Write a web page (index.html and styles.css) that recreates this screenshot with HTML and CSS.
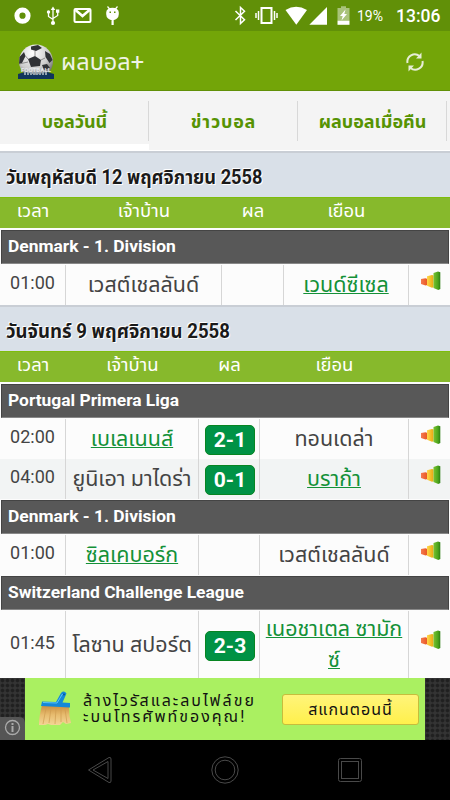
FILE: index.html
```
<!DOCTYPE html>
<html lang="th">
<head>
    <meta charset="UTF-8">
    <meta name="viewport" content="width=device-width, initial-scale=1.0">
    <title>ผลบอล+</title>
    <link rel="stylesheet" href="styles.css">
</head>
<body>
    <svg class="defs" width="0" height="0">
        <defs>
            <linearGradient id="red"><stop offset="0" stop-color="#f47a50"/><stop offset="1" stop-color="#e8561f"/></linearGradient>
            <linearGradient id="yellow"><stop offset="0" stop-color="#ffd84a"/><stop offset="1" stop-color="#e9a813"/></linearGradient>
            <linearGradient id="green"><stop offset="0" stop-color="#79c231"/><stop offset="0.65" stop-color="#4da51c"/><stop offset="1" stop-color="#2b7d12"/></linearGradient>
            <radialGradient id="ball" cx="0.4" cy="0.25" r="0.8"><stop offset="0" stop-color="#fff"/><stop offset="0.6" stop-color="#ccc"/><stop offset="1" stop-color="#555"/></radialGradient>
            <linearGradient id="straw" x2="0" y2="1"><stop offset="0" stop-color="#c98c3c"/><stop offset="0.5" stop-color="#e8bd70"/><stop offset="1" stop-color="#f3d595"/></linearGradient>
            <symbol id="stats" viewBox="0 0 20 20">
                <path d="M0 8 4.500 7.300 6.500 8V14L4.500 14.500 0 13z" fill="url(#red)"/>
                <path d="M6 5.300 11 4 12.500 4.500V16.200L11 16.700 6 14.800z" fill="url(#yellow)"/>
                <path d="M12.500 2 17 0.500 19.300 1.300V18L17.300 19 12.500 17z" fill="url(#green)"/>
            </symbol>
        </defs>
    </svg>

    <div class="statusbar">
        <svg width="125" height="31" viewBox="0 0 125 31">
            <circle cx="22.5" cy="15.7" r="5.6" fill="none" stroke="#fff" stroke-width="5"/>
            <g fill="none" stroke="#fff" stroke-width="1.3">
                <path d="M53 9V23M48.5 12.5V16.5L53 19.5M57.7 11.5V15.5L53 18.5"/>
            </g>
            <path d="M50.7 10 53 6.5 55.3 10zM56 9.5h3.3v3.3H56z" fill="#fff"/>
            <circle cx="48.5" cy="12" r="1.7" fill="#fff"/>
            <circle cx="53" cy="23" r="2.1" fill="#fff"/>
            <rect x="74.5" y="9" width="16" height="13" rx="1" fill="none" stroke="#fff" stroke-width="2"/>
            <path d="M75.5 10 82.5 16 89.5 10" fill="none" stroke="#fff" stroke-width="2.5"/>
            <path d="M106.200 12.500a6.300 4.800 0 0 1 12.600 0v1.700a6.300 6 0 0 1-12.600 0zM111.500 19h2.200v6h-2.200z" fill="#fff"/>
            <path d="M107.5 6.5l2.5 3M117.5 6.5l-2.5 3" stroke="#fff" stroke-width="1.2"/>
            <path d="M109.5 11.5h1.5v1.5h-1.5zM114 11.5h1.5v1.5H114z" fill="#619008"/>
        </svg>
        <svg class="right-icons" width="125" height="31" viewBox="230 0 125 31">
            <path d="M235.5 11 244.5 19.8 240.5 23.5V7.5L244.5 11.3 235.5 20" fill="none" stroke="#fff" stroke-width="1.5"/>
            <rect x="261.5" y="8" width="10" height="15" fill="none" stroke="#fff" stroke-width="2"/>
            <path d="M258.5 11v9M256 13v5M274.5 11v9M277 13v5" stroke="#fff" stroke-width="1.5"/>
            <path d="M285.5 10q10.500-6.500 21.500 0L296.300 24.700z" fill="#fff"/>
            <path d="M327 7v17.800H309.300z" fill="#fff"/>
            <path d="M337.500 8h3.500V6.200h5V8h3.500v13h-12z" fill="#a9c37a"/>
            <path d="M337.500 20.800h12v4h-12z" fill="#fff"/>
            <path d="M345.500 9.500 340 16h2.700l-1.200 4.500L347 14h-2.700z" fill="#fff"/>
        </svg>
        <span class="battery">19%</span>
        <span class="clock">13:06</span>
    </div>

    <div class="appbar">
        <svg width="36" height="36" viewBox="0 0 36 36">
            <circle cx="18" cy="17.500" r="17" fill="url(#ball)"/>
            <path d="M13 2.500 20 1l4 3-6 3-5-1.500zM1.500 13 6 8l1.500 4L4 19l-3 1zM10 15l7-3 6 4-1 6-9 1zM27 7l5 3 2.500 6-3 3-4-6zM24 21l5-1 3 4-6 2z" fill="#303236"/>
            <path d="M7.500 12 10 15M17 12V7M23 16l4-2M1 20l9-2" stroke="#777" stroke-width="0.800"/>
            <path d="M0 30 7 28 18 31 29 28 36 30V35H0z" fill="#10355c"/>
            <path d="M6 29.500h24" stroke="#91a2b0" stroke-width="3" stroke-dasharray="2 1"/>
            <text class="logo-text" x="3" y="27.500" textLength="30" lengthAdjust="spacingAndGlyphs">FOOTBALL</text>
        </svg>
        <h1>ผลบอล+</h1>
        <svg class="refresh" width="18" height="20" viewBox="0 0 18 20">
            <path d="M1.500 11A7.400 7.400 0 0 1 13.500 4M16.500 9A7.400 7.400 0 0 1 4.500 16" fill="none" stroke="#e6edd6" stroke-width="2"/>
            <path d="M15.500 0.500V6.500H10zM2.500 19.500V13.500H8z" fill="#e6edd6"/>
        </svg>
    </div>

    <div class="tabs">
        <a class="tab active">บอลวันนี้</a>
        <a class="tab news">ข่าวบอล</a>
        <a class="tab">ผลบอลเมื่อคืน</a>
    </div>

    <div class="day first">
        <h2><span>วันพฤหัสบดี 12 พฤศจิกายน 2558</span></h2>
        <div class="row head">
            <span>เวลา</span><span>เจ้าบ้าน</span><span>ผล</span><span>เยือน</span>
        </div>
        <h3>Denmark - 1. Division</h3>
        <div class="row match">
            <span class="time">01:00</span>
            <span class="team">เวสต์เชลลันด์</span>
            <span></span>
            <span class="team"><u>เวนด์ซีเซล</u></span>
            <span class="chart"><svg width="20" height="20"><use href="#stats"/></svg></span>
        </div>
    </div>

    <div class="day second">
        <h2><span>วันจันทร์ 9 พฤศจิกายน 2558</span></h2>
        <div class="row head">
            <span>เวลา</span><span>เจ้าบ้าน</span><span>ผล</span><span>เยือน</span>
        </div>
        <h3>Portugal Primera Liga</h3>
        <div class="row match">
            <span class="time">02:00</span>
            <span class="team"><u>เบเลเนนส์</u></span>
            <span class="result"><b class="score">2-1</b></span>
            <span class="team">ทอนเดล่า</span>
            <span class="chart"><svg width="20" height="20"><use href="#stats"/></svg></span>
        </div>
        <div class="row match even">
            <span class="time">04:00</span>
            <span class="team">ยูนิเอา มาไดร่า</span>
            <span class="result"><b class="score">0-1</b></span>
            <span class="team"><u>บราก้า</u></span>
            <span class="chart"><svg width="20" height="20"><use href="#stats"/></svg></span>
        </div>
        <h3>Denmark - 1. Division</h3>
        <div class="row match">
            <span class="time">01:00</span>
            <span class="team"><u>ซิลเคบอร์ก</u></span>
            <span></span>
            <span class="team">เวสต์เชลลันด์</span>
            <span class="chart"><svg width="20" height="20"><use href="#stats"/></svg></span>
        </div>
        <h3>Switzerland Challenge League</h3>
        <div class="row match tall">
            <span class="time">01:45</span>
            <span class="team">โลซาน สปอร์ต</span>
            <span class="result"><b class="score">2-3</b></span>
            <span class="team"><u>เนอชาเตล ซามัก<br>ซ์</u></span>
            <span class="chart"><svg width="20" height="20"><use href="#stats"/></svg></span>
        </div>
    </div>

    <div class="ad">
        <div class="info">
            <svg width="25" height="23" viewBox="0 0 25 23">
                <path d="M0 0h19q6 0 6 6v17H0z" fill="#555"/>
                <circle cx="12.500" cy="10.500" r="7" fill="none" stroke="#aaa" stroke-width="1.300"/>
                <path d="M12.500 9v6M12.500 6v2" stroke="#aaa" stroke-width="2"/>
            </svg>
        </div>
        <div class="ad-body">
            <svg width="34" height="36" viewBox="0 0 34 36">
                <path d="M4 14 31 16Q31 25 33 32L28 33 25 31 22 34H13L10 33 7 34H1Q1 25 4 14z" fill="url(#straw)"/>
                <path d="M8 17 5 33M13 17 11 32M18 17 17 33M23 17 23 31M27 18 29 32" stroke="#cf9c52" stroke-width="0.700"/>
                <path d="M4 10.500 18 11 23 2Q26-1 28.500 2.500L24.500 11.500 32 12V16.500L3 15z" fill="#1488d8"/>
                <path d="M5 11.500 19 12 24.500 3" fill="none" stroke="#5cc3f5" stroke-width="1"/>
                <circle cx="26" cy="3.500" r="1" fill="#0a5796"/>
            </svg>
            <p>ล้างไวรัสและลบไฟล์ขย<br>ะบนโทรศัพท์ของคุณ!</p>
            <a class="scan">สแกนตอนนี้</a>
        </div>
    </div>

    <div class="navbar">
        <svg width="450" height="60" viewBox="0 0 450 60" fill="none" stroke="#494949">
            <path d="M88.500 30 109 17.500Q111 17 111 19V41Q111 43 109 42.500zM93 30 108 21.500V38.500z"/>
            <circle cx="225" cy="30" r="13.200"/>
            <circle cx="225" cy="30" r="9.800"/>
            <rect x="338.500" y="18.500" width="23" height="23" rx="2"/>
            <rect x="341.500" y="21.500" width="17" height="17"/>
        </svg>
    </div>
</body>
</html>
```
FILE: styles.css
```
* {
    box-sizing: border-box;
}
body {
    margin: 0;
    width: 450px;
    height: 800px;
    overflow: hidden;
    background: #fcfcfc;
    color: #444;
    font-family: Roboto, "Noto Sans Thai", "Noto Sans", sans-serif;
}
.defs {
    position: absolute;
}
svg {
    display: block;
    flex: none;
}
h1, h2, h3, p {
    margin: 0;
}
.statusbar {
    display: flex;
    align-items: center;
    height: 31px;
    background: #619008;
    color: #fff;
}
.right-icons {
    margin-left: 105px;
}
.battery {
    width: 30px;
    margin-left: 2px;
    font-size: 14px;
}
.clock {
    margin-left: 9px;
    font-size: 17.5px;
    font-weight: 500;
}
.appbar {
    display: flex;
    align-items: center;
    height: 60px;
    padding: 2px 26px 0 18px;
    background: #73a508;
    border-bottom: 1px solid #619008;
}
.logo-text {
    font-size: 6px;
    font-weight: bold;
    fill: #e4e8ec;
}
h1 {
    margin-left: 7px;
    font-size: 23.5px;
    font-weight: 400;
    line-height: 40px;
    color: #eef3e4;
}
.refresh {
    margin-left: auto;
}
.tabs {
    display: flex;
    height: 60px;
    background: #f4f4f4;
    border-bottom: 1px solid #fff;
}
.tab {
    width: 149px;
    height: 59px;
    padding-top: 11px;
    text-align: center;
    font-size: 18px;
    line-height: 40px;
    font-weight: bold;
    color: #569303;
    white-space: nowrap;
    background: linear-gradient(#d8d8d8, #d8d8d8) no-repeat right 10px / 1px 40px;
}
.tab.news {
    letter-spacing: 0.8px;
}
.tab.active {
    border-bottom: 6px solid #fff;
}
h2 {
    height: 46px;
    padding-left: 6px;
    background: #d9e0e8;
    border-top: 2px solid #c9ced5;
    color: #1a1a1a;
    font-size: 20px;
    line-height: 48px;
    font-weight: bold;
    text-shadow: 1px 1px 0 #fff, -1px -1px 0 #fff;
    white-space: nowrap;
}
h2 span {
    display: inline-block;
    transform: scaleX(0.91);
    transform-origin: left;
}
.second h2 span {
    transform: scaleX(0.93);
}
.row {
    display: grid;
    text-align: center;
}
.first .row {
    grid-template-columns: 66px 156px 62px 125px 41px;
}
.second .row {
    grid-template-columns: 66px 133px 61px 149px 41px;
}
.head {
    height: 31px;
    background: #87b92c;
    border-top: 1px solid #7ebd0c;
    color: #fff;
    font-size: 18.5px;
    line-height: 27px;
}
h3 {
    height: 34px;
    margin: 2px 1px 1px;
    padding-left: 6px;
    background: #585858;
    border: 1px solid #444;
    border-bottom-color: #888;
    color: #fff;
    font-size: 17.4px;
    line-height: 31px;
    font-weight: bold;
}
.match + h3 {
    margin-top: 1px;
}
.match {
    height: 40px;
    background: #fcfcfc;
}
.match > span {
    display: flex;
    justify-content: center;
    align-items: center;
    white-space: nowrap;
}
.match > span:not(:last-child) {
    border-right: 1px solid #d6d6d6;
}
.match .time {
    padding-bottom: 5px;
    font-size: 18px;
}
.match .team {
    font-size: 21.5px;
    line-height: 31px;
    padding-bottom: 1px;
}
u {
    color: #149138;
    text-decoration-thickness: 1px;
}
.match .result {
    padding: 2px 0 0 2px;
}
.score {
    width: 50px;
    height: 30px;
    border-radius: 5px;
    border: 1px solid #078522;
    background: #009245;
    color: #fff;
    font-size: 21px;
    line-height: 28px;
}
.match .chart {
    align-items: flex-start;
    padding: 6px 0 0 2px;
}
.even {
    background: #f2f4f4;
}
.tall {
    height: 67px;
}
.tall .chart {
    padding-top: 19px;
}
.ad {
    display: flex;
    height: 62px;
    background: radial-gradient(circle, #202020 1.2px, #343434 2.4px) 0 0 / 5px 5px;
}
.info {
    display: flex;
    align-items: flex-end;
    width: 25px;
}
.ad-body {
    display: flex;
    align-items: center;
    width: 400px;
    padding: 0 6px 0 13px;
    background: #aaf061;
    color: #111;
}
.ad p {
    width: 185px;
    margin-left: 11px;
    font-size: 16px;
    line-height: 16px;
    letter-spacing: 2px;
    white-space: nowrap;
}
.scan {
    width: 137px;
    height: 31px;
    margin-left: auto;
    border: 1px solid #c7bd3c;
    border-radius: 3px;
    background: linear-gradient(#fff47a, #fff04c);
    text-align: center;
    font-size: 16px;
    line-height: 30px;
    letter-spacing: 1px;
}
.navbar {
    height: 60px;
    background: #000;
}
```
